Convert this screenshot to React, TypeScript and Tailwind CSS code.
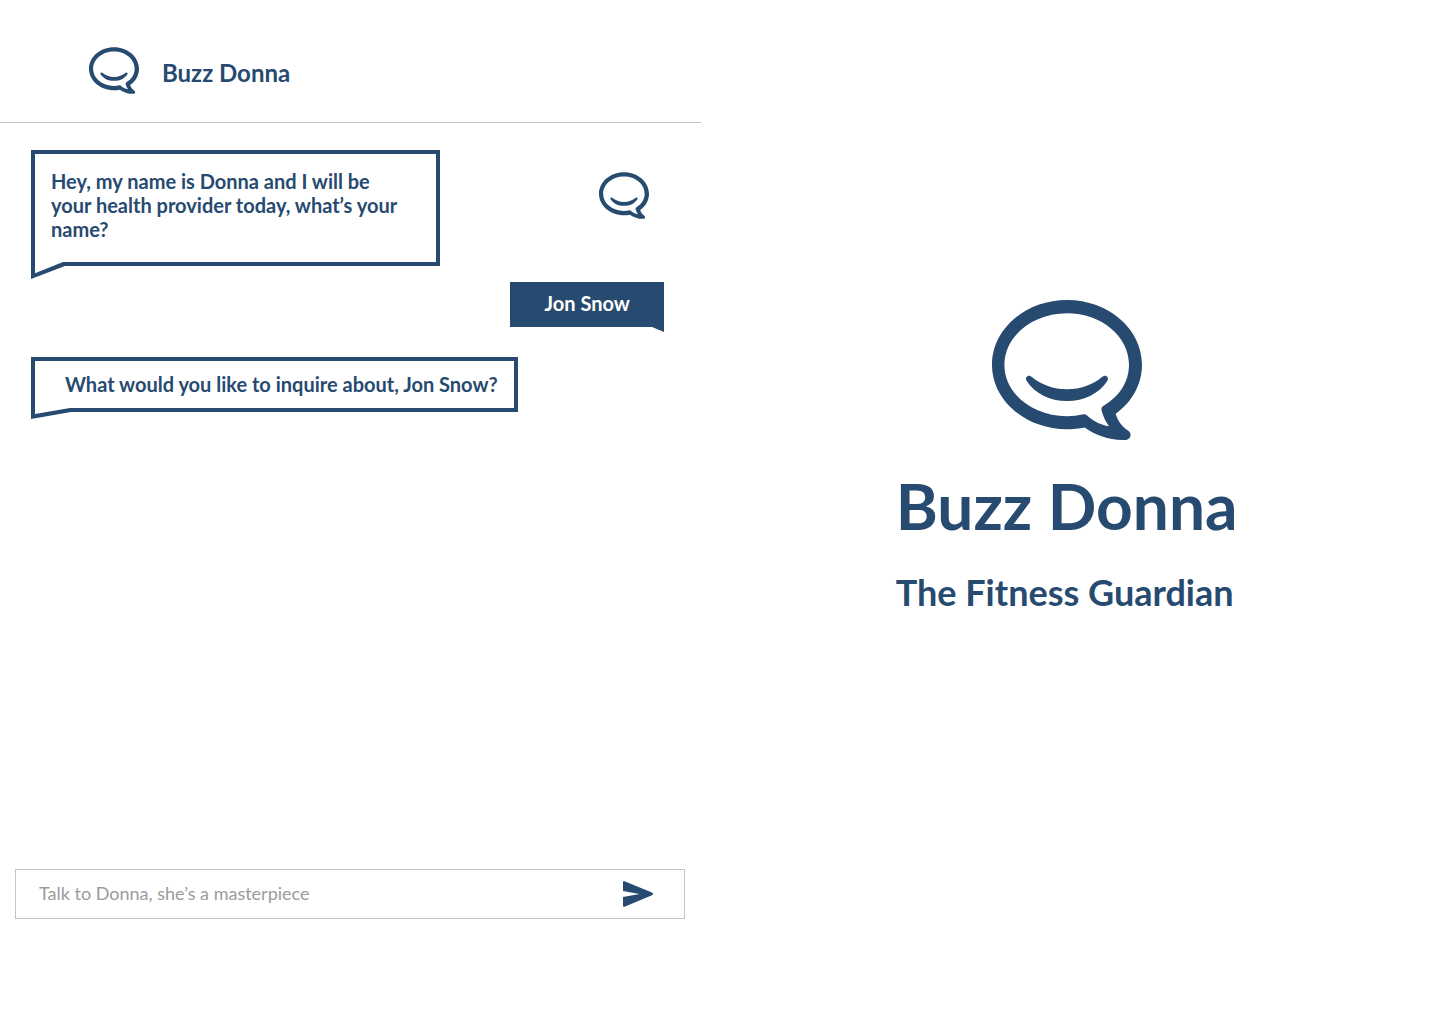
import type { ReactNode } from "react";

function Logo({ className }: { className: string }) {
  return (
    <svg viewBox="0 0 150 140" className={className} fill="currentColor" role="img" aria-label="Buzz Donna">
      <path
        fillRule="evenodd"
        d="M75 0C116.400 0 150 29 150 64.700C150 84.500 140 102 123.700 113.700C125.500 120.500 130 126.500 136 130.500C140.500 133.500 138.800 139.800 133 140C118 140.300 104 135.500 92.700 127.400C87 128.600 81 129.200 75 129.200C33.600 129.200 0 100.300 0 64.700C0 29 33.600 0 75 0ZM75 13.300C40.400 13.300 12.400 36.500 12.400 65C12.400 93.500 40.400 116.200 75 116.200C80.500 116.200 86 115.500 91.500 114.200Q93.200 113.900 94.500 115C101.500 121.300 108.500 125 117 126.300C113.500 121.500 111 116 109.600 110.500C109.200 108.500 109.800 106.800 111.600 105.800C127.500 96.500 137 81.800 137 65C137 36.500 109.400 13.300 75 13.300Z"
      />
      <path d="M39.500 76.800C50 85 61 89.300 75 89.300C89 89.300 100 85 110.500 76.800C113.800 74.200 117.500 77.500 115.300 81C107 93.500 92.500 101 75 101C57.500 101 43 93.500 34.700 81C32.500 77.500 36.200 74.200 39.500 76.800Z" />
    </svg>
  );
}

function DonnaBubble({ children, tail, className }: { children: ReactNode; tail: ReactNode; className: string }) {
  return (
    <div className={`relative border-4 border-[#274a70] text-xl leading-6 font-bold ${className}`}>
      {children}
      {tail}
    </div>
  );
}

export default function App() {
  return (
    <div className="flex min-h-screen bg-white font-['Lato',sans-serif] text-[#274a70]">
      <main className="flex w-[48.7%] flex-col">
        <header className="flex items-start gap-[23px] border-b border-[#c4c4c4] pt-[47px] pb-7 pl-[89px]">
          <Logo className="h-[47px] w-[50px]" />
          <h2 className="mt-3 text-2xl leading-7 font-bold">Buzz Donna</h2>
        </header>

        <section aria-label="Conversation" className="flex flex-1 flex-col pt-[27px] pr-[37px] pl-[31px]">
          <div className="flex items-start justify-between pr-[15px]">
            <DonnaBubble
              className="w-[409px] pt-[15px] pr-8 pb-[21px] pl-4"
              tail={
                <svg className="absolute top-full -left-1 h-[17px] w-[34px]" viewBox="0 0 34 17" aria-hidden="true">
                  <path fill="#274a70" d="M0 0H34V4L0 17Z" />
                  <path fill="#fff" d="M4 0H32L4 11.200Z" />
                </svg>
              }
            >
              Hey, my name is Donna and I will be your health provider today, what’s your name?
            </DonnaBubble>
            <Logo className="mt-[22px] h-[47px] w-[50px]" />
          </div>

          <div className="relative mt-4 flex h-[45px] w-[154px] items-center justify-center self-end bg-[#274a70] pb-1 text-xl leading-6 font-bold text-white">
            Jon Snow
            <svg className="absolute top-full right-0 h-[5px] w-[12px]" viewBox="0 0 12 5" aria-hidden="true">
              <path fill="#274a70" d="M0 0H12V5Z" />
            </svg>
          </div>

          <DonnaBubble
            className="mt-[30px] w-[487px] self-start pt-[11px] pb-3 pl-[30px]"
            tail={
              <svg className="absolute top-full -left-1 h-[11px] w-[40px]" viewBox="0 0 40 11" aria-hidden="true">
                <path fill="#274a70" d="M0 0H40V4L0 11Z" />
                <path fill="#fff" d="M4 0H39L4 6Z" />
              </svg>
            }
          >
            What would you like to inquire about, Jon Snow?
          </DonnaBubble>
        </section>

        <form
          className="mr-4 mb-[105px] ml-[15px] flex h-[50px] items-center border border-[#c4c4c4] pr-[31px] pl-[23px]"
          onSubmit={(e) => e.preventDefault()}
        >
          <input
            type="text"
            aria-label="Message"
            placeholder="Talk to Donna, she’s a masterpiece"
            className="min-w-0 flex-1 bg-transparent pb-0.5 text-lg outline-none placeholder:text-[#9b9b9b]"
          />
          <button type="submit" aria-label="Send">
            <svg className="h-[26px] w-[30px]" viewBox="0 0 30 26" fill="#274a70" aria-hidden="true">
              <path d="M0 1.200Q0 -0.200 1.500 0.200L29 11.400Q31 12.900 29 14.300L1.500 25.700Q0 26.200 0 24.800V16L16.500 13L0 10Z" />
            </svg>
          </button>
        </form>
      </main>

      <aside className="flex flex-1 flex-col items-center pt-[300px] pr-2">
        <Logo className="h-[140px] w-[150px]" />
        <h1 className="mt-[27px] text-[64px] leading-[77px] font-bold">Buzz Donna</h1>
        <p className="mt-6 pr-1 text-4xl leading-[48px] font-bold">The Fitness Guardian</p>
      </aside>
    </div>
  );
}
